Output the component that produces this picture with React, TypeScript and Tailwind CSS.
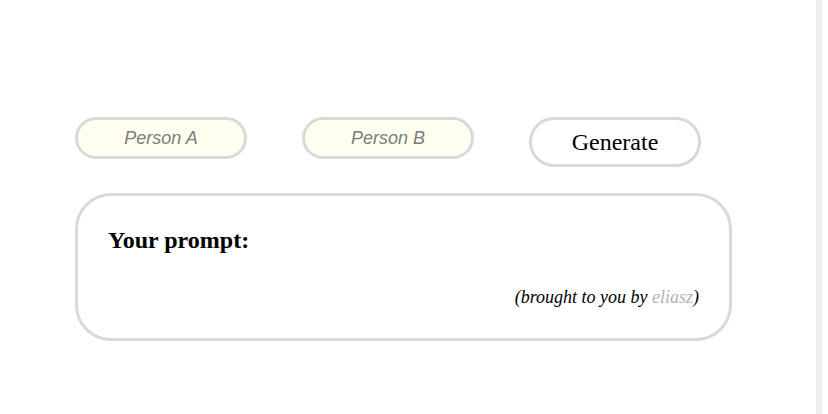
import { useState } from 'react';

const serif = { fontFamily: '"Liberation Serif", "Times New Roman", serif' };

export default function App() {
  const [personA, setPersonA] = useState('');
  const [personB, setPersonB] = useState('');

  return (
    <div className="relative h-[414px] w-[828px] overflow-hidden bg-white">
      {/* faint scrollbar strip on the right */}
      <div className="absolute right-[6px] top-0 h-full w-[6px] bg-[#efefef]" />

      <div className="pl-[75px] pt-[117px]">
        {/* Inputs row */}
        <div className="flex items-start gap-[55px]">
          <input
            value={personA}
            onChange={(e) => setPersonA(e.target.value)}
            placeholder="Person A"
            className="h-[42px] w-[172px] rounded-full border-[3px] border-[#d9d9d9] bg-[#fffff0] text-center text-[18px] italic text-[#555] outline-none placeholder:text-[#7d7d7d]"
            style={{ fontFamily: '"Liberation Sans", Arial, sans-serif' }}
          />
          <input
            value={personB}
            onChange={(e) => setPersonB(e.target.value)}
            placeholder="Person B"
            className="h-[42px] w-[172px] rounded-full border-[3px] border-[#d9d9d9] bg-[#fffff0] text-center text-[18px] italic text-[#555] outline-none placeholder:text-[#7d7d7d]"
            style={{ fontFamily: '"Liberation Sans", Arial, sans-serif' }}
          />
          <button
            className="h-[50px] w-[172px] rounded-full border-[3px] border-[#d9d9d9] bg-white text-[24px] text-black"
            style={serif}
          >
            Generate
          </button>
        </div>

        {/* Prompt box */}
        <div
          className="mt-[26px] flex h-[148px] w-[657px] flex-col rounded-[36px] border-[3px] border-[#d9d9d9] px-[30px] pt-[30px]"
          style={serif}
        >
          <h2 className="text-[24px] font-bold leading-[28px] text-black">Your prompt:</h2>
          <p className="mt-[33px] text-right text-[18px] italic leading-[20px] text-black">
            (brought to you by <span className="text-[#b3b3b3]">eliasz</span>)
          </p>
        </div>
      </div>
    </div>
  );
}
